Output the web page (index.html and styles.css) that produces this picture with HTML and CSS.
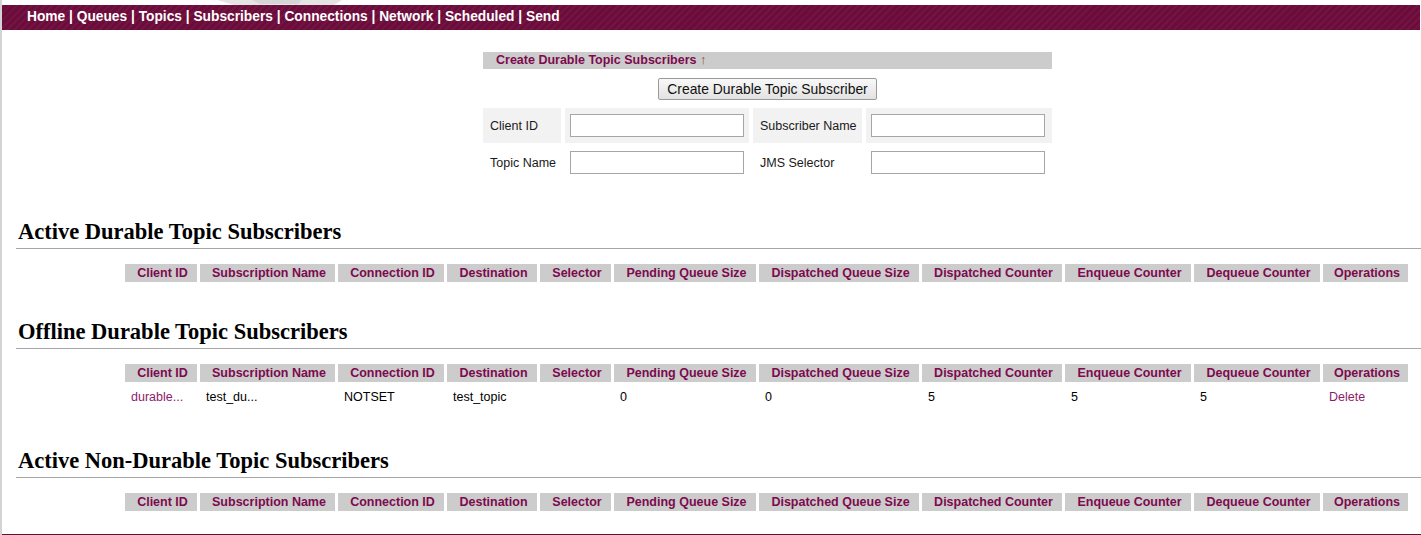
FILE: index.html
```html
<!DOCTYPE html>
<html>
<head>
<meta charset="utf-8">
<title>Subscribers</title>
<link rel="stylesheet" href="styles.css">
</head>
<body>
<div class="page">
  <div class="topstrip">
    <svg width="420" height="5" viewBox="0 0 420 5">
      <path d="M215 0 L340 0 L332 5 L232 5 Z" fill="#e4e4e4"/>
      <path d="M250 0 L300 0 L296 4 L258 4 Z" fill="#d6d6d6"/>
    </svg>
  </div>
  <div class="nav">
    <a href="#">Home</a> | <a href="#">Queues</a> | <a href="#">Topics</a> | <a href="#">Subscribers</a> | <a href="#">Connections</a> | <a href="#">Network</a> | <a href="#">Scheduled</a> | <a href="#">Send</a>
  </div>
  <div class="content">
    <div class="create">
      <div class="create-head">Create Durable Topic Subscribers <span class="arrow">↑</span></div>
      <div class="btn-row"><button class="btn">Create Durable Topic Subscriber</button></div>
      <div class="form-grid">
        <div class="cell shade label">Client ID</div>
        <div class="cell shade field"><input class="inp" type="text"></div>
        <div class="cell shade label">Subscriber Name</div>
        <div class="cell shade field"><input class="inp" type="text"></div>
        <div class="cell label">Topic Name</div>
        <div class="cell field"><input class="inp" type="text"></div>
        <div class="cell label">JMS Selector</div>
        <div class="cell field"><input class="inp" type="text"></div>
      </div>
    </div>

    <h2 class="sec first">Active Durable Topic Subscribers</h2>
    <table class="subs">
      <thead>
        <tr><th class="c1">Client ID</th><th class="c2">Subscription Name</th><th class="c3">Connection ID</th><th class="c4">Destination</th><th class="c5">Selector</th><th class="c6">Pending Queue Size</th><th class="c7">Dispatched Queue Size</th><th class="c8">Dispatched Counter</th><th class="c9">Enqueue Counter</th><th class="c10">Dequeue Counter</th><th class="c11">Operations</th></tr>
      </thead>
      <tbody></tbody>
    </table>

    <h2 class="sec">Offline Durable Topic Subscribers</h2>
    <table class="subs">
      <thead>
        <tr><th class="c1">Client ID</th><th class="c2">Subscription Name</th><th class="c3">Connection ID</th><th class="c4">Destination</th><th class="c5">Selector</th><th class="c6">Pending Queue Size</th><th class="c7">Dispatched Queue Size</th><th class="c8">Dispatched Counter</th><th class="c9">Enqueue Counter</th><th class="c10">Dequeue Counter</th><th class="c11">Operations</th></tr>
      </thead>
      <tbody>
        <tr><td><a href="#">durable...</a></td><td>test_du...</td><td>NOTSET</td><td>test_topic</td><td></td><td>0</td><td>0</td><td>5</td><td>5</td><td>5</td><td><a href="#">Delete</a></td></tr>
      </tbody>
    </table>

    <h2 class="sec">Active Non-Durable Topic Subscribers</h2>
    <table class="subs">
      <thead>
        <tr><th class="c1">Client ID</th><th class="c2">Subscription Name</th><th class="c3">Connection ID</th><th class="c4">Destination</th><th class="c5">Selector</th><th class="c6">Pending Queue Size</th><th class="c7">Dispatched Queue Size</th><th class="c8">Dispatched Counter</th><th class="c9">Enqueue Counter</th><th class="c10">Dequeue Counter</th><th class="c11">Operations</th></tr>
      </thead>
      <tbody></tbody>
    </table>
  </div>
  <div class="footer"></div>
</div>
</body>
</html>
```

FILE: styles.css
```css
html, body {
  margin: 0;
  padding: 0;
  background: #ffffff;
}

body {
  font-family: "Liberation Sans", Arial, sans-serif;
  font-size: 12.5px;
  color: #000;
}

.page {
  border-left: 2px solid #d4d4d4;
  min-height: 535px;
  overflow: hidden;
}

.topstrip {
  height: 5px;
  overflow: hidden;
}

.topstrip svg {
  display: block;
}

.nav {
  height: 25px;
  line-height: 23px;
  margin-right: 1px;
  padding-left: 25px;
  background-color: #6c0c3b;
  background-image: repeating-linear-gradient(135deg, rgba(255,255,255,0.035) 0px, rgba(255,255,255,0.035) 2px, rgba(0,0,0,0) 2px, rgba(0,0,0,0) 5px);
  color: #fff;
  font-weight: bold;
  font-size: 13.75px;
}

.nav a {
  color: #fff;
  text-decoration: none;
}

.content {
  padding-left: 14px;
}

.create {
  width: 569px;
  margin-left: 467px;
  margin-top: 22px;
}

.create-head {
  background: #cccccc;
  height: 17px;
  line-height: 17px;
  padding-left: 13px;
  font-weight: bold;
  font-size: 12.5px;
  color: #7d0a4e;
}

.arrow {
  color: #8a5536;
  font-weight: normal;
  font-size: 12.5px;
}

.btn-row {
  display: flex;
  justify-content: center;
  margin-top: 9px;
  margin-bottom: 8px;
}

.btn {
  height: 22px;
  padding: 0 8px;
  font-family: "Liberation Sans", Arial, sans-serif;
  font-size: 13.9px;
  color: #111;
  background: linear-gradient(#f8f8f8, #e2e2e2);
  border: 1px solid #9a9a9a;
  border-radius: 2px;
}

.form-grid {
  display: grid;
  grid-template-columns: 78px 184px 109px 186px;
  grid-auto-rows: 35px;
  gap: 2px 4px;
}

.cell {
  display: flex;
  align-items: center;
}

.shade {
  background: #f2f2f2;
}

.label {
  padding-left: 7px;
  font-size: 12.5px;
  color: #1a1a1a;
}

.field {
  padding-left: 5px;
}

.inp {
  box-sizing: border-box;
  width: 174px;
  height: 23px;
  margin: 0;
  border: 1px solid #a6a6a6;
  background: #fff;
}

.sec {
  font-family: "Liberation Serif", "Times New Roman", serif;
  font-size: 22.5px;
  font-weight: bold;
  line-height: 26px;
  margin: 35px 0 0 0;
  padding: 0 0 3px 2px;
  border-bottom: 1px solid #a6a6a6;
}

.sec.first {
  margin-top: 39px;
}

.subs {
  table-layout: fixed;
  width: 1289px;
  border-collapse: separate;
  border-spacing: 3px 2px;
  margin: 13px 10px 0 auto;
}

.subs th {
  box-sizing: border-box;
  background: #cccccc;
  color: #7d0a4e;
  font-weight: bold;
  font-size: 12.5px;
  height: 18px;
  padding: 0 8px 0 11px;
  text-align: center;
  white-space: nowrap;
  overflow: hidden;
}

.subs .c1 { width: 72px; }
.subs .c2 { width: 135px; }
.subs .c3 { width: 106px; }
.subs .c4 { width: 90px; }
.subs .c5 { width: 71px; }
.subs .c6 { width: 142px; }
.subs .c7 { width: 160px; }
.subs .c8 { width: 140px; }
.subs .c9 { width: 126px; }
.subs .c10 { width: 126px; }
.subs .c11 { width: 85px; }

.subs td {
  font-size: 12.5px;
  padding: 6px 6px 7px 6px;
  text-align: left;
  white-space: nowrap;
}

.subs td a {
  color: #8b1c6c;
  text-decoration: none;
}

.footer {
  margin-top: 21px;
  height: 40px;
  background: #6c0c3b;
}
```
